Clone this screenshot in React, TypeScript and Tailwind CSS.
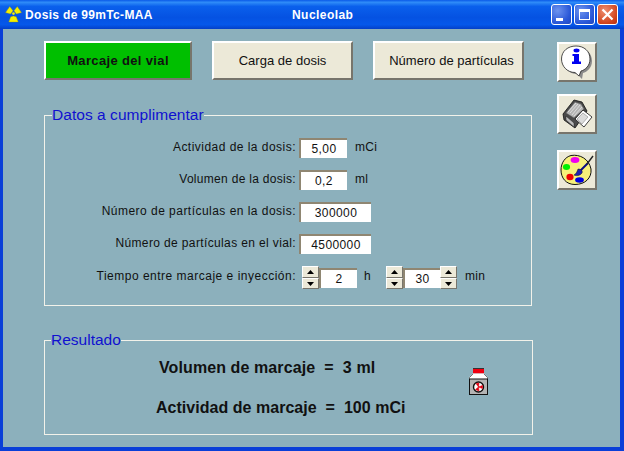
import React from "react";

const font = { fontFamily: '"Liberation Sans", Arial, sans-serif' };

function Trefoil() {
  return (
    <svg width="17" height="17" viewBox="0 0 18 18" className="shrink-0">
      <path d="M0.5 7 L5 0.5 L8.5 5 L6 8.5 Z" fill="#f5f000" stroke="#8a8a20" strokeWidth="0.4" />
      <path d="M17.5 7 L13 0.5 L9.5 5 L12 8.5 Z" fill="#f5f000" stroke="#8a8a20" strokeWidth="0.4" />
      <path d="M4 17 L6 11.5 L9 10.5 L12 11.5 L14 17 Z" fill="#f5f000" stroke="#8a8a20" strokeWidth="0.4" />
      <circle cx="9" cy="8" r="1.4" fill="#f5f000" />
    </svg>
  );
}

function CaptionButton({ children, red }: { children: React.ReactNode; red?: boolean }) {
  return (
    <div
      className={`w-[21px] h-[21px] rounded-[3px] border border-white flex items-center justify-center shrink-0 ${
        red ? "bg-[radial-gradient(circle_at_35%_30%,#ee8f70,#d0431c_70%,#b8300f)]" : "bg-[radial-gradient(circle_at_30%_30%,#6d93ee,#2a58d8_65%,#1f47c0)]"
      }`}
    >
      {children}
    </div>
  );
}

function BigButton({ label, active, w, shift }: { label: string; active?: boolean; w: string; shift?: string }) {
  return (
    <div
      className={`${w} ${shift ?? ""} h-[39px] flex items-center justify-center text-[13px] text-[#111] border-t-2 border-l-2 border-t-white border-l-white border-b-2 border-r-2 border-b-[#77756c] border-r-[#77756c] ${
        active ? "bg-[#00bf00] font-bold tracking-[0.35px]" : "bg-[#ece9d8] tracking-[0.02px]"
      }`}
    >
      {label}
    </div>
  );
}

function IconButton({ children }: { children: React.ReactNode }) {
  return (
    <div className="w-[40px] h-[40px] bg-[#ece9d8] border-t-2 border-l-2 border-t-white border-l-white border-b-2 border-r-2 border-b-[#77756c] border-r-[#77756c] flex items-center justify-center">
      {children}
    </div>
  );
}

function InfoIcon() {
  return (
    <svg width="34" height="36" viewBox="0 0 34 36">
      <path d="M18 4 C26 4 32 9 32 17 C32 24 27 28 23 29 L22 35 L17 30 C9 30 4 24 4 17 C4 9 10 4 18 4 Z" fill="#8a8a8a" />
      <path d="M16 2 C24 2 30 7 30 15 C30 22 25 26 21 27 L19 32 L15 28.5 C7 28.5 1.5 22 1.5 15 C1.5 7 8 2 16 2 Z" fill="#fff" stroke="#222" strokeWidth="0.8" />
      <ellipse cx="16.5" cy="6.5" rx="3" ry="1.9" fill="#0000f0" />
      <path d="M12.5 10 H19 V17.5 H21 V20 H12 V17.5 H14 V12 H12.5 Z" fill="#0000f0" />
    </svg>
  );
}

function PrinterIcon() {
  return (
    <svg width="32" height="32" viewBox="0 0 32 32">
      <path d="M2 16 L13 2 L21 4 L26 13 L14 30 L3 22 Z" fill="#4a4a4a" stroke="#111" strokeWidth="0.8" />
      <path d="M5 15 L14 4 L20 6 L23 11 L13 20 Z" fill="#b4b4b4" stroke="#555" strokeWidth="0.5" />
      <path d="M7 14 L15 5 M9 15 L17 6 M11 17 L19 7 M13 18 L21 9" stroke="#efefef" strokeWidth="0.7" />
      <path d="M14 21 L22 12 L31 19 L23 29 Z" fill="#fff" stroke="#111" strokeWidth="0.8" />
      <path d="M16 21 L22 15 L27 19 L21 26 Z" fill="#dcdcdc" stroke="#777" strokeWidth="0.5" />
      <path d="M5 18 L13 25 L13 29 L5 22 Z" fill="#bcbcbc" stroke="#222" strokeWidth="0.5" />
    </svg>
  );
}

function PaletteIcon() {
  return (
    <svg width="34" height="32" viewBox="0 0 34 32">
      <path d="M11 1.5 C20 0 29 5 31 15 C32 24 25 30.5 15 30.5 C6 30.5 1 24 1 16 C1 9 5 3 11 1.5 Z" fill="#f7f07a" stroke="#111" strokeWidth="1" />
      <ellipse cx="15" cy="6" rx="4.4" ry="3" fill="#f000f0" />
      <ellipse cx="6.5" cy="13" rx="3.6" ry="3" fill="#00f000" />
      <ellipse cx="10" cy="23" rx="3.6" ry="3.2" fill="#f00000" />
      <ellipse cx="19.5" cy="26" rx="4.4" ry="2.8" fill="#0000e0" />
      <path d="M19 18 L28 9" stroke="#0a0a80" strokeWidth="2" />
      <path d="M18 15 C21 15 23 17 22 19 C20 22 16 22 14 21 C16 20 17 18 18 15 Z" fill="#2020b0" stroke="#111" strokeWidth="0.5" />
      <path d="M27 10 L33 2" stroke="#222" strokeWidth="1.4" />
    </svg>
  );
}

function BottleIcon() {
  return (
    <svg width="19" height="27" viewBox="0 0 19 27" className="shrink-0">
      <rect x="4" y="0" width="11" height="5.5" fill="#f00010" />
      <rect x="4" y="0" width="11" height="1" fill="#333" />
      <path d="M4 5.5 H15 L19 9.5 V12 H0 V9.5 Z" fill="#fff" />
      <rect x="0.5" y="11" width="18" height="15.5" fill="#b4b4b4" stroke="#111" />
      <path d="M0.5 11 V9.5 L4 6 M18.5 11 V9.5 L15 6" stroke="#222" strokeWidth="0.6" fill="none" />
      <circle cx="9.5" cy="19" r="5" fill="#fff" stroke="#111" strokeWidth="1.4" />
      <path d="M9.5 19 L7 15.5 L10 15 Z M9.5 19 L13.5 17.5 L13.5 20.5 Z M9.5 19 L6.5 21.5 L10 23 Z" fill="#e00010" stroke="#e00010" strokeWidth="0.6" />
    </svg>
  );
}

function Input({ value, w }: { value: string; w: string }) {
  return (
    <div className={`${w} h-[20px] bg-white border-t-2 border-l-2 border-t-[#8f8672] border-l-[#8f8672] flex items-center justify-center text-[12px] tracking-[0.4px] text-[#111]`}>
      {value}
    </div>
  );
}

function Field({ label, value, unit, wide, track }: { label: string; value: string; unit?: string; wide?: boolean; track?: string }) {
  return (
    <div className="flex items-center h-[20px]">
      <span className={`w-[251px] pb-[3px] text-right text-[12px] ${track ?? "tracking-[0.47px]"} text-[#111] whitespace-nowrap`}>{label}</span>
      <Input value={value} w={wide ? "w-[72px] ml-[3px]" : "w-[48px] ml-[3px]"} />
      {unit && <span className="ml-[8px] pb-[3px] text-[12px] tracking-[0.3px] text-[#111]">{unit}</span>}
    </div>
  );
}

function SpinButton({ up }: { up?: boolean }) {
  return (
    <div className={`w-[17px] ${up ? "h-[12px]" : "h-[11px]"} bg-[#ece9d8] border-t border-l border-t-white border-l-white border-b border-r border-b-[#77756c] border-r-[#77756c] flex items-center justify-center`}>
      <svg width="7" height="4" viewBox="0 0 7 4">
        <path d={up ? "M3.5 0 L7 4 H0 Z" : "M0 0 H7 L3.5 4 Z"} fill="#000" />
      </svg>
    </div>
  );
}

function Spin() {
  return (
    <div className="flex flex-col shrink-0">
      <SpinButton up />
      <SpinButton />
    </div>
  );
}

export default function App() {
  return (
    <div style={font} className="w-[624px] h-[451px] flex flex-col overflow-hidden bg-[#0a3fd8]">
      <div className="h-[29px] shrink-0 flex items-center pl-[5px] pr-[6px] bg-[linear-gradient(180deg,#0a5ae8_0%,#2f8cf8_8%,#0a60ec_22%,#0552e2_60%,#0558ea_85%,#0340c8_100%)]">
        <Trefoil />
        <span className="ml-[3px] w-[267px] text-[12px] font-bold tracking-[0.33px] text-white">Dosis de 99mTc-MAA</span>
        <span className="text-[12px] font-bold tracking-[0.45px] text-white">Nucleolab</span>
        <div className="ml-auto flex gap-[2px]">
          <CaptionButton>
            <div className="w-[7px] h-[3px] bg-white mt-[10px] mr-[4px]" />
          </CaptionButton>
          <CaptionButton>
            <div className="w-[11px] h-[11px] border border-white border-t-[3px]" />
          </CaptionButton>
          <CaptionButton red>
            <svg width="13" height="13" viewBox="0 0 13 13">
              <path d="M1.5 1.5 L11.5 11.5 M11.5 1.5 L1.5 11.5" stroke="#fff" strokeWidth="2.2" />
            </svg>
          </CaptionButton>
        </div>
      </div>

      <div className="flex-1 ml-[3px] mr-[4px] mb-[4px] bg-[#8cb0bc] pl-[41px] pt-[12px] flex items-start">
        <div className="w-[513px] flex flex-col">
          <div className="flex gap-[20px]">
            <BigButton label="Marcaje del vial" active w="w-[148px]" />
            <BigButton label="Carga de dosis" w="w-[141px]" />
            <BigButton label="Número de partículas" w="w-[151px]" shift="pl-[6px]" />
          </div>

          <fieldset className="mt-[26px] w-[488px] h-[200px] border border-[#f2f2ea]">
            <legend className="ml-[7px] text-[15.5px] tracking-[0.05px] leading-[18px] text-[#1010d0]">Datos a cumplimentar</legend>
            <div className="flex flex-col gap-[12px] mt-[14px]">
              <Field label="Actividad de la dosis:" value="5,00" unit="mCi" />
              <Field label="Volumen de la dosis:" value="0,2" unit="ml" track="tracking-[0.3px]" />
              <Field label="Número de partículas en la dosis:" value="300000" wide />
              <Field label="Número de partículas en el vial:" value="4500000" wide track="tracking-[0.37px]" />
              <div className="flex items-center h-[23px]">
                <span className="w-[251px] pb-[3px] text-right text-[12px] tracking-[0.5px] text-[#111] whitespace-nowrap">Tiempo entre marcaje e inyección:</span>
                <div className="ml-[6px]"><Spin /></div>
                <Input value="2" w="w-[38px]" />
                <span className="ml-[7px] pb-[3px] w-[22px] text-[12px] text-[#111]">h</span>
                <Spin />
                <Input value="30" w="w-[37px]" />
                <Spin />
                <span className="ml-[8px] pb-[3px] text-[12px] tracking-[0.3px] text-[#111]">min</span>
              </div>
            </div>
          </fieldset>

          <fieldset className="mt-[25px] w-[489px] h-[104px] border border-[#f2f2ea]">
            <legend className="ml-[6px] text-[15.5px] leading-[18px] text-[#1010d0]">Resultado</legend>
            <div className="flex items-start">
              <div className="w-[424px] pl-[111px] flex flex-col gap-[22px] mt-[10px] text-[16px] font-bold text-[#111] whitespace-nowrap">
                <div className="h-[18px] leading-[18px] ml-[3px] tracking-[0.1px]">Volumen de marcaje&nbsp; =&nbsp; 3 ml</div>
                <div className="h-[18px] leading-[18px] tracking-[0.03px]">Actividad de marcaje&nbsp; =&nbsp; 100 mCi</div>
              </div>
              <div className="mt-[19px]"><BottleIcon /></div>
            </div>
          </fieldset>
        </div>

        <div className="flex flex-col mt-[1px]">
          <IconButton><InfoIcon /></IconButton>
          <div className="mt-[12px]"><IconButton><PrinterIcon /></IconButton></div>
          <div className="mt-[16px]"><IconButton><PaletteIcon /></IconButton></div>
        </div>
      </div>
    </div>
  );
}
